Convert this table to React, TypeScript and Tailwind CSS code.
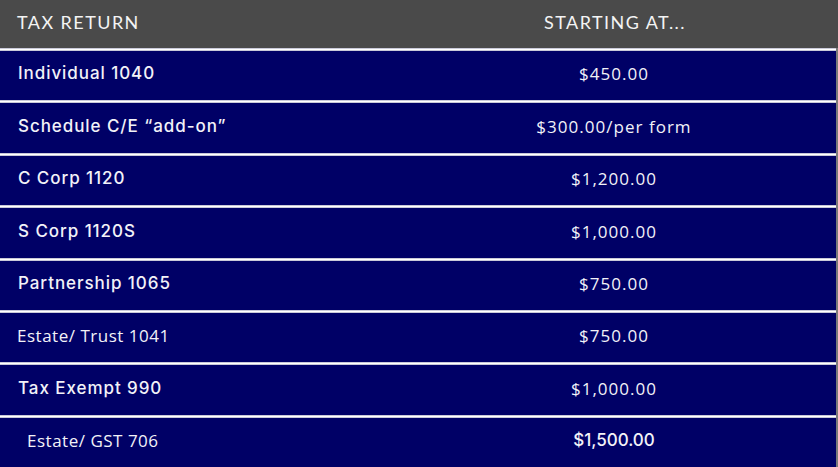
const rows = [
  { name: 'Individual 1040', price: '$450.00', nameFont: 'poppins', priceFont: 'light' },
  { name: 'Schedule C/E \u201cadd-on\u201d', price: '$300.00/per form', nameFont: 'poppins', priceFont: 'light' },
  { name: 'C Corp 1120', price: '$1,200.00', nameFont: 'poppins', priceFont: 'light' },
  { name: 'S Corp 1120S', price: '$1,000.00', nameFont: 'poppins', priceFont: 'light' },
  { name: 'Partnership 1065', price: '$750.00', nameFont: 'poppins', priceFont: 'light' },
  { name: 'Estate/ Trust 1041', price: '$750.00', nameFont: 'open', priceFont: 'light' },
  { name: 'Tax Exempt 990', price: '$1,000.00', nameFont: 'poppins', priceFont: 'light' },
  { name: 'Estate/ GST 706', price: '$1,500.00', nameFont: 'open-indent', priceFont: 'medium' },
];

export default function App() {
  return (
    <div className="w-[838px] h-[467px] overflow-hidden bg-[#7a7a7a]">
      {/* Header */}
      <div className="grid grid-cols-[392px_1fr] h-[48px] items-center pb-[3px] bg-[#4a4a4a] text-[#f4f4f4] font-['Lato',sans-serif] text-[18px] tracking-[0.08em]">
        <div className="pl-[17px]">TAX RETURN</div>
        <div className="text-center">STARTING AT...</div>
      </div>

      {rows.map((row) => (
        <div key={row.name} className="mr-[2px]">
          <div className="h-[3px] bg-white border-y border-[#c9c9d8]"></div>
          <div className="grid grid-cols-[392px_1fr] h-[49.4px] items-center pb-[3px] bg-[#000066] text-[#f2f2f8] text-[17px]">
            <div
              className={
                row.nameFont === 'poppins'
                  ? "pl-[18px] font-['Inter',sans-serif] font-medium tracking-[0.055em]"
                  : row.nameFont === 'open'
                  ? "pl-[17px] font-['Open_Sans',sans-serif] tracking-[0.03em]"
                  : "pl-[27px] font-['Open_Sans',sans-serif] tracking-[0.03em]"
              }
            >
              {row.name}
            </div>
            <div
              className={
                row.priceFont === 'light'
                  ? "text-center font-['Open_Sans',sans-serif] tracking-[0.06em]"
                  : "text-center font-['Inter',sans-serif] font-medium"
              }
            >
              {row.price}
            </div>
          </div>
        </div>
      ))}
    </div>
  );
}
